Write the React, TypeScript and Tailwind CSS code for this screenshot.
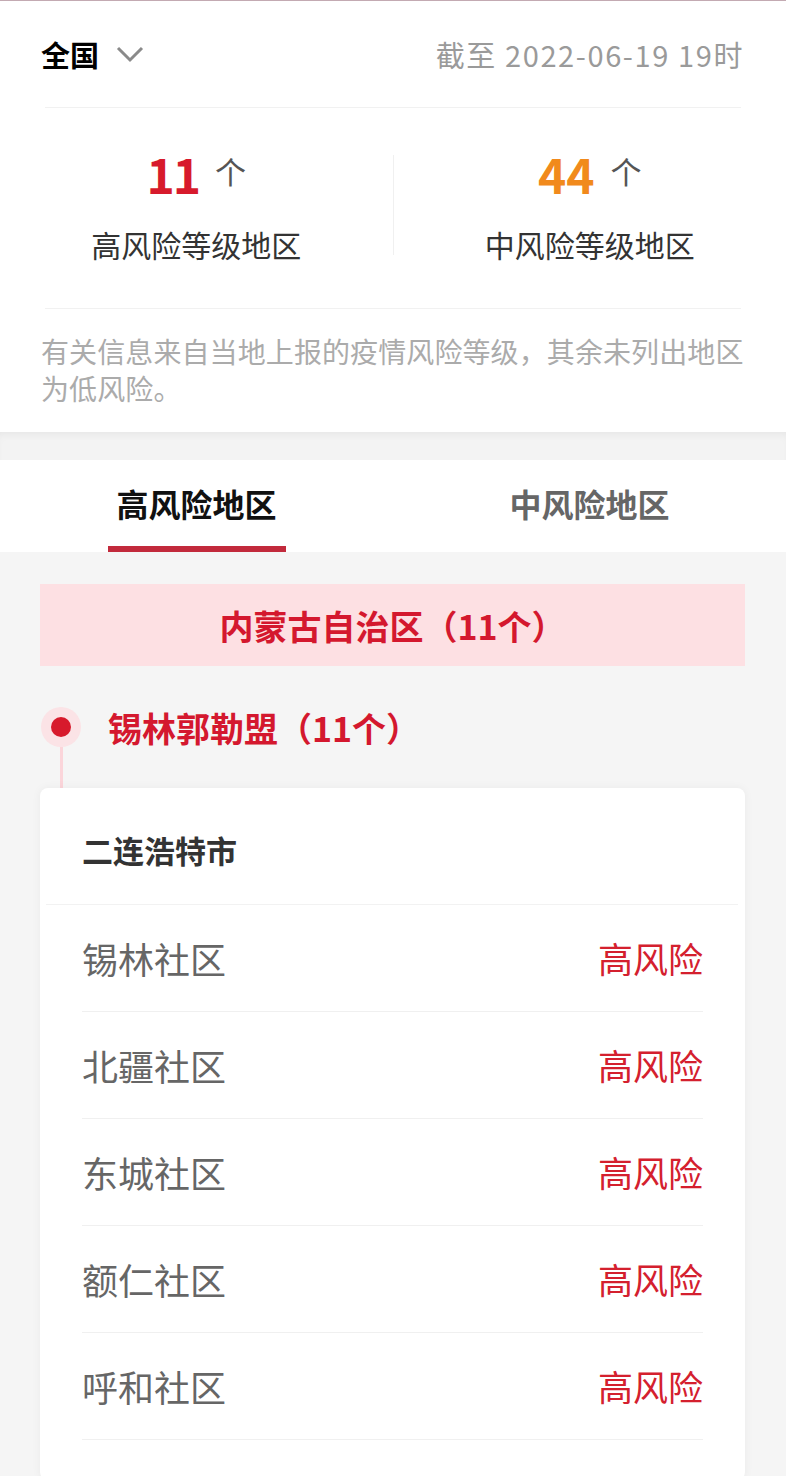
import React from "react";

const font = { fontFamily: '"Noto Sans CJK SC", "Noto Sans", sans-serif' };

const rows = ["锡林社区", "北疆社区", "东城社区", "额仁社区", "呼和社区"];

export default function App() {
  return (
    <div className="w-[786px] min-h-[1476px] bg-[#f5f5f5] overflow-hidden" style={font}>
      <div className="bg-white">
        <div className="h-px bg-[#c3aab2]" />
        <div className="h-[106px] flex items-center justify-between pl-[41px] pr-[42px]">
          <div className="flex items-center">
            <span className="text-[29px] font-bold text-black leading-none">全国</span>
            <svg className="ml-[17px]" width="28" height="18" viewBox="0 0 28 18">
              <path d="M2 3 L14 15 L26 3" fill="none" stroke="#8a8a8a" strokeWidth="3" />
            </svg>
          </div>
          <span className="text-[29px] tracking-[1.6px] text-[#9a9a9a] leading-none">截至 2022-06-19 19时</span>
        </div>
        <div className="mx-[45px] h-px bg-[#f1f1f1]" />
        <div className="h-[200px] flex pt-[40px]">
          <div className="flex-1 flex flex-col items-center">
            <div className="h-[50px] flex items-center">
              <span className="text-[48px] font-bold text-[#d71a2c] leading-none tracking-[-2px]">11</span>
              <span className="ml-[16px] -mt-[6px] text-[31px] text-[#555] leading-none">个</span>
            </div>
            <div className="mt-[26px] h-[40px] flex items-center text-[30px] text-[#333]">高风险等级地区</div>
          </div>
          <div className="w-px h-[100px] mt-[7px] bg-[#f0f0f0]" />
          <div className="flex-1 flex flex-col items-center">
            <div className="h-[50px] flex items-center">
              <span className="text-[48px] font-bold text-[#f18a1c] leading-none">44</span>
              <span className="ml-[16px] -mt-[6px] text-[31px] text-[#555] leading-none">个</span>
            </div>
            <div className="mt-[26px] h-[40px] flex items-center text-[30px] text-[#333]">中风险等级地区</div>
          </div>
        </div>
        <div className="mx-[45px] h-px bg-[#f1f1f1]" />
        <p className="pl-[41px] pr-[36px] pt-[24px] pb-[25px] text-[28px] tracking-[0.1px] leading-[37px] text-[#ababab]">
          有关信息来自当地上报的疫情风险等级，其余未列出地区为低风险。
        </p>
      </div>
      <div className="h-[28px] bg-[#f3f3f3] shadow-[inset_0_6px_8px_-4px_rgba(0,0,0,0.06)]" />
      <div className="bg-white h-[92px] flex">
        <div className="flex-1 flex flex-col items-center">
          <div className="h-[86px] flex items-center text-[32px] font-bold text-[#111]">高风险地区</div>
          <div className="w-[178px] h-[6px] bg-[#c22a3c]" />
        </div>
        <div className="flex-1 flex flex-col items-center">
          <div className="h-[86px] flex items-center text-[32px] font-bold text-[#666]">中风险地区</div>
        </div>
      </div>
      <div className="mt-[32px] ml-[40px] mr-[41px] h-[82px] bg-[#fde0e3] flex items-center justify-center">
        <span className="text-[34px] font-bold text-[#d4182e]">内蒙古自治区（11个）</span>
      </div>
      <div className="mt-[41px] h-[40px] flex items-center">
        <div className="ml-[41px] w-[40px] h-[40px] rounded-full bg-[#fbe3e6] flex items-center justify-center">
          <div className="w-[20px] h-[20px] rounded-full bg-[#d71a2c]" />
        </div>
        <span className="ml-[27px] text-[34px] font-bold text-[#d4182e]">锡林郭勒盟（11个）</span>
      </div>
      <div className="ml-[60px] w-[3px] h-[41px] bg-[#fbd5da]" />
      <div className="ml-[40px] mr-[41px] bg-white rounded-[8px] shadow-[0_0_10px_rgba(0,0,0,0.05)] pb-[40px]">
        <div className="h-[116px] flex items-center pl-[42px] pt-[8px]">
          <span className="text-[31px] font-bold text-[#333]">二连浩特市</span>
        </div>
        <div className="ml-[6px] mr-[7px] h-px bg-[#f2f2f2]" />
        {rows.map((r) => (
          <div key={r} className="mx-[42px]">
            <div className="h-[106px] flex items-center justify-between">
              <span className="text-[36px] text-[#666]">{r}</span>
              <span className="text-[35px] text-[#d4202e]">高风险</span>
            </div>
            <div className="h-px bg-[#f0f0f0]" />
          </div>
        ))}
      </div>
    </div>
  );
}
